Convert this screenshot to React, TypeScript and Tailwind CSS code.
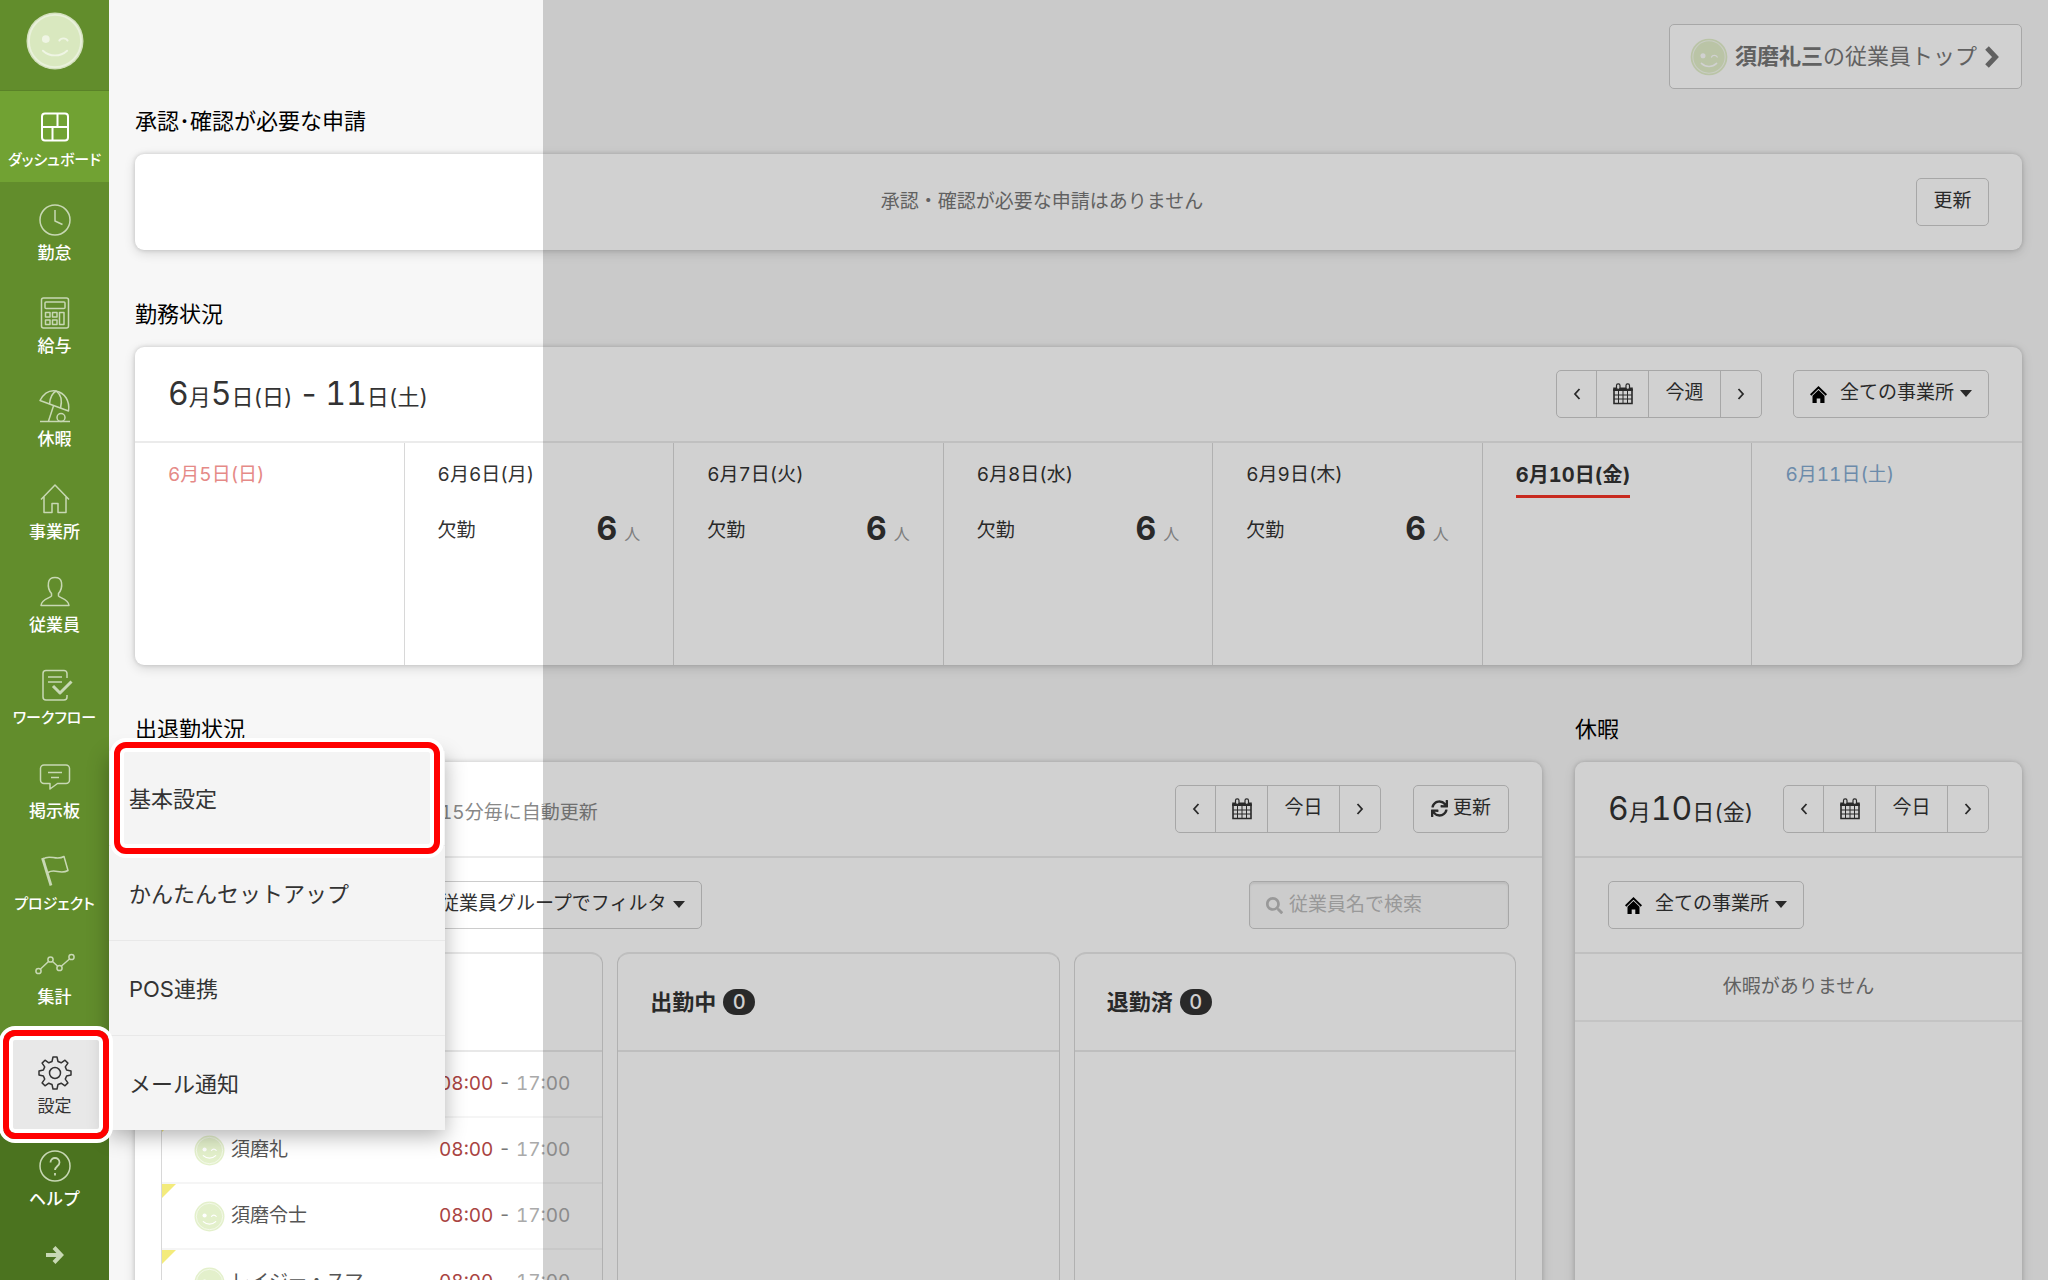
import type { ReactNode } from "react";
import { FaSearch, FaSync } from "react-icons/fa";

function Face({ className }: { className: string }) {
  return (
    <svg viewBox="0 0 60 60" className={className} aria-hidden="true">
      <circle cx="30" cy="30" r="29" fill="#e3f0cb" />
      <circle cx="30" cy="30" r="25.5" fill="none" stroke="#fff" strokeOpacity="0.7" strokeWidth="1.6" />
      <circle cx="20.500" cy="28" r="4" fill="#fff" />
      <path d="M34 30c1.500-3.500 7-3.500 9 0" fill="none" stroke="#fff" strokeWidth="2.200" strokeLinecap="round" />
      <path d="M18 40c7 6.500 17 6.500 24 0" fill="none" stroke="#fff" strokeWidth="2.400" strokeLinecap="round" />
    </svg>
  );
}

function AvatarFace() {
  return (
    <svg viewBox="0 0 60 60" className="size-[58px]" aria-hidden="true">
      <circle cx="30" cy="30" r="29.500" fill="#d3e0bd" />
      <circle cx="30" cy="30" r="27" fill="#d9e8bf" stroke="#e9f1db" strokeWidth="2" />
      <circle cx="20.500" cy="28" r="4" fill="#eff5e4" />
      <path d="M34.500 29.500c1.500-3 7-3 8.500 0" fill="none" stroke="#eff5e4" strokeWidth="2" strokeLinecap="round" />
      <path d="M17.500 40c7 6.500 18 6.500 25 0" fill="none" stroke="#eff5e4" strokeWidth="2" strokeLinecap="round" />
    </svg>
  );
}

function NavSvg({ children }: { children: ReactNode }) {
  return (
    <svg viewBox="0 0 40 36" className="h-9 w-10" fill="none" stroke="currentColor" strokeWidth="1.5" strokeLinejoin="round" aria-hidden="true">
      {children}
    </svg>
  );
}

const icons = {
  dashboard: (
    <NavSvg>
      <rect x="7" y="4.500" width="26" height="27" rx="3" strokeWidth="2" />
      <path d="M7 18h26M22.500 4.500V18M17.500 18v13.500" strokeWidth="2" />
    </NavSvg>
  ),
  clock: (
    <NavSvg>
      <circle cx="20" cy="18" r="15" />
      <path d="M20 8v11l7.500 3.500" />
    </NavSvg>
  ),
  calculator: (
    <NavSvg>
      <rect x="6.500" y="3" width="27" height="30" rx="2" />
      <rect x="10" y="7" width="20" height="6.500" rx="1" />
      <path d="M10.500 17.500h4.500v4.500h-4.500zM17.500 17.500h4.500v4.500h-4.500zM10.500 25h4.500v4.500h-4.500zM17.500 25h4.500v4.500h-4.500zM24.500 17.500H29v12h-4.500z" />
    </NavSvg>
  ),
  umbrella: (
    <NavSvg>
      <path d="M5 12.500C9 5 15 2 21 3c9 2 14 10 12.500 20z" />
      <path d="M14.500 16c.500-6 3-11 6.500-13 4.500 3 6.500 9 4.500 17M18.500 18 13.500 33M5 33.500h30" />
      <circle cx="26" cy="29.500" r="4" />
    </NavSvg>
  ),
  house: (
    <NavSvg>
      <path d="M6 18.500 20 4l14 14.500M9 16v15.500h8v-9h6v9h8V16" />
    </NavSvg>
  ),
  person: (
    <NavSvg>
      <path d="M16.500 19.500c-3-3.500-3.500-8-3-11C14 5 16.500 3.500 20 3.500s6 1.500 6.500 5c.500 3 0 7.500-3 11v2.500c1 2 10 3 10.500 9.500H6c.500-6.500 9.500-7.500 10.500-9.500z" />
    </NavSvg>
  ),
  workflow: (
    <NavSvg>
      <path d="M32 11V6.500a3 3 0 0 0-3-3H11a3 3 0 0 0-3 3V30a3 3 0 0 0 3 3h18a3 3 0 0 0 3-3v-2" />
      <path d="M13 10h14M13 15h14" />
      <path d="m18 19 7 7 11.500-11.500" strokeWidth="3" />
    </NavSvg>
  ),
  board: (
    <NavSvg>
      <path d="M9 5h22a3.500 3.500 0 0 1 3.500 3.500V20a3.500 3.500 0 0 1-3.500 3.500h-8.500L15 29v-5.500H9A3.500 3.500 0 0 1 5.500 20V8.500A3.500 3.500 0 0 1 9 5zM13 12.500h14M16 17.500h8" />
    </NavSvg>
  ),
  flag: (
    <NavSvg>
      <path d="M7.500 5 16 32.500" strokeWidth="2.800" />
      <path d="M8 6c7-5.500 13 2.500 21-2.500l4 14c-8 4.500-13-2.500-20 2" />
    </NavSvg>
  ),
  graph: (
    <NavSvg>
      <circle cx="3.500" cy="25" r="2.600" />
      <circle cx="15.500" cy="13.500" r="2.600" />
      <circle cx="24.500" cy="22" r="2.600" />
      <circle cx="36.500" cy="11" r="2.600" />
      <path d="m5.500 23 8-7.500M17.500 15.500l5 4.500M26.500 20l8-7" />
    </NavSvg>
  ),
  gear: (
    <NavSvg>
      <circle cx="20" cy="18" r="5.500" />
      <path d="M18 2h4l1 4.500 3.200 1.300L30 5.200l2.900 2.900-2.600 3.800 1.300 3.100L36 16v4l-4.400 1-1.300 3.100 2.600 3.800-2.900 2.900-3.800-2.600L23 29.500 22 34h-4l-1-4.500-3.200-1.300L10 30.800l-2.900-2.900 2.600-3.800L8.400 21 4 20v-4l4.400-1 1.300-3.100-2.600-3.800L10 5.200l3.800 2.600L17 6.500z" />
    </NavSvg>
  ),
  help: (
    <NavSvg>
      <circle cx="20" cy="18" r="15" />
      <path d="M15.500 14.500c0-6 9-6 9 0 0 3.500-4.500 4-4.500 7.500M20 25v2.500" strokeWidth="1.800" />
    </NavSvg>
  ),
};

const regularLabel = "text-[17px] font-medium";
const compactLabel = "text-[15px] font-medium [font-feature-settings:'palt']";

const navItems = [
  { label: "ダッシュボード", icon: icons.dashboard, active: true, text: compactLabel },
  { label: "勤怠", icon: icons.clock, text: regularLabel },
  { label: "給与", icon: icons.calculator, text: regularLabel },
  { label: "休暇", icon: icons.umbrella, text: regularLabel },
  { label: "事業所", icon: icons.house, text: regularLabel },
  { label: "従業員", icon: icons.person, text: regularLabel },
  { label: "ワークフロー", icon: icons.workflow, text: compactLabel },
  { label: "掲示板", icon: icons.board, text: regularLabel },
  { label: "プロジェクト", icon: icons.flag, text: compactLabel },
  { label: "集計", icon: icons.graph, text: regularLabel },
];

const menuItems = ["基本設定", "かんたんセットアップ", "POS連携", "メール通知"];

function NavLink({ label, icon, tone, text }: { label: string; icon: ReactNode; tone: string; text: string }) {
  return (
    <a href="#" className={`flex h-full flex-col items-center pt-[18px] ${tone}`}>
      {icon}
      <span className={`mt-1 leading-[22px] whitespace-nowrap text-[var(--label)] ${text}`}>{label}</span>
    </a>
  );
}

function Highlight({ className }: { className: string }) {
  return (
    <span
      className={`pointer-events-none absolute rounded-xl border-6 border-[#ff0000] shadow-[0_0_0_4px_#fff,inset_0_0_0_4px_#fff] ${className}`}
    />
  );
}

function Sidebar() {
  return (
    <nav className="relative z-20 flex w-[109px] shrink-0 flex-col bg-[#628d2c]">
      <a href="#" aria-label="プロフィール" className="flex h-[91px] justify-center border-b border-[#5a8228] pt-3">
        <AvatarFace />
      </a>
      <ul className="flex flex-col gap-[2px]">
        {navItems.map((item) => (
          <li key={item.label} className={`h-[91px] [--label:#fff] ${item.active ? "bg-[#71a233]" : ""}`}>
            <NavLink label={item.label} icon={item.icon} text={item.text} tone={item.active ? "text-white" : "text-[#c8d8b4]"} />
          </li>
        ))}
      </ul>
      <ul className="mt-auto bg-[#4b731f]">
        <li className="relative h-[93px] bg-[#e8e8e8] [--label:#333]">
          <NavLink label="設定" icon={icons.gear} text="text-[17px]" tone="text-[#333]" />
          <ul className="absolute bottom-0 left-full w-[336px] bg-[#f4f4f4] shadow-[0_6px_20px_rgba(0,0,0,0.3)]">
            {menuItems.map((label, i) => (
              <li key={label} className="relative border-b border-[#e8e8e8] last:border-b-0">
                <a href="#" className="flex h-[94px] items-center px-5 pt-0.5 text-[22px] text-[#333]">
                  {label}
                </a>
                {i === 0 && <Highlight className="inset-x-[5px] -top-[9px] -bottom-[9px]" />}
              </li>
            ))}
          </ul>
          <Highlight className="-top-[7px] right-0 -bottom-[9px] left-[3px]" />
        </li>
        <li className="h-[93px] [--label:#fff]">
          <NavLink label="ヘルプ" icon={icons.help} text={regularLabel} tone="text-[#c8d8b4]" />
        </li>
        <li className="flex h-[57px] justify-center pt-[22px]">
          <button type="button" aria-label="メニューを展開" className="h-5 text-[#c8d8b4]">
            <svg viewBox="0 0 18 18" className="size-[18px]" fill="none" stroke="currentColor" strokeWidth="4" aria-hidden="true">
              <path d="M0 9h15M8 1.500 15.200 9 8 16.500" />
            </svg>
          </button>
        </li>
      </ul>
    </nav>
  );
}

function Heading({ children }: { children: ReactNode }) {
  return <h2 className="mb-[17px] h-8 text-[22px] leading-8 text-black">{children}</h2>;
}

function Card({ children, className = "" }: { children: ReactNode; className?: string }) {
  return (
    <div className={`rounded-[9px] bg-white shadow-[0_0_4px_rgba(0,0,0,0.16),0_3px_12px_rgba(0,0,0,0.14)] ${className}`}>{children}</div>
  );
}

function Big({ children }: { children: ReactNode }) {
  return <span className="text-[32px]">{children}</span>;
}

function CalendarIcon() {
  return (
    <svg viewBox="0 0 20 22" className="h-[22px] w-5" aria-hidden="true">
      <path d="M1 6v14.500h18V6" fill="none" stroke="#333" strokeWidth="1.600" />
      <path d="M.2 4.500h19.600V8H.2z" fill="#333" />
      <path d="M5.500 8v12.500M10 8v12.500M14.500 8v12.500M1 12h18M1 16h18" stroke="#333" strokeWidth="1" />
      <rect x="3.500" y="0.800" width="3.500" height="5.500" rx="1.600" fill="#fff" stroke="#333" strokeWidth="1.200" />
      <rect x="13" y="0.800" width="3.500" height="5.500" rx="1.600" fill="#fff" stroke="#333" strokeWidth="1.200" />
    </svg>
  );
}

function Angle({ d }: { d: string }) {
  return (
    <svg viewBox="0 0 8 12" className="h-3 w-2" fill="none" stroke="#333" strokeWidth="1.800" aria-hidden="true">
      <path d={d} />
    </svg>
  );
}

function DateNav({ label }: { label: string }) {
  return (
    <div className="flex h-12 w-[206px] shrink-0 divide-x divide-[#ccc] rounded-[5px] border border-[#ccc] text-[19px] text-[#333]">
      <button type="button" aria-label="前へ" className="flex w-[40px] items-center justify-center">
        <Angle d="M6.500 1 2 6l4.500 5" />
      </button>
      <button type="button" aria-label="カレンダー" className="flex w-[52px] items-center justify-center">
        <CalendarIcon />
      </button>
      <button type="button" className="flex-1 pb-px">{label}</button>
      <button type="button" aria-label="次へ" className="flex w-[40px] items-center justify-center">
        <Angle d="m1.500 1 4.500 5-4.500 5" />
      </button>
    </div>
  );
}

function Caret() {
  return (
    <svg viewBox="0 0 12 7" className="pointer-events-none absolute top-5 right-[17px] h-[7px] w-3" aria-hidden="true">
      <path d="M0 0h12L6 7z" fill="#333" />
    </svg>
  );
}

function OfficeSelect() {
  return (
    <div className="relative">
      <svg viewBox="0 0 17 17" className="pointer-events-none absolute top-4 left-[17px] size-[17px]" aria-hidden="true">
        <path d="M8.500 0 17 8.300l-1.300 1.400-7.200-7-7.200 7L0 8.300z" fill="#000" />
        <path d="M8.500 4 14.500 9.800V17h-4.200v-4.500H6.700V17H2.500V9.800z" fill="#000" />
      </svg>
      <select
        aria-label="事業所"
        className="block h-12 w-[196px] appearance-none rounded-[5px] border border-[#ccc] bg-transparent pb-px pl-[46px] text-[19px] text-[#333]"
      >
        <option>全ての事業所</option>
      </select>
      <Caret />
    </div>
  );
}

const days = [
  { label: "6月5日(日)", tone: "text-[#e58a87]" },
  { label: "6月6日(月)", tone: "text-[#333]", absent: 6 },
  { label: "6月7日(火)", tone: "text-[#333]", absent: 6 },
  { label: "6月8日(水)", tone: "text-[#333]", absent: 6 },
  { label: "6月9日(木)", tone: "text-[#333]", absent: 6 },
  { label: "6月10日(金)", tone: "border-b-3 border-[#f53426] text-xl font-bold text-[#333]" },
  { label: "6月11日(土)", tone: "text-[#84aad0]" },
];

const rows = [
  { name: "", flagged: false },
  { name: "須磨礼", flagged: true },
  { name: "須磨令士", flagged: true },
  { name: "レイジー・スマ", flagged: true },
];

function StatusColumn({ title, children }: { title?: string; children?: ReactNode }) {
  return (
    <div className="rounded-t-xl border border-b-0 border-[#d8d8d8] border-t-2 border-t-[#e8e8e8]">
      <div className="flex h-[98px] items-center gap-[7px] border-b-2 border-[#e8e8e8] px-8 text-[22px] text-[#333]">
        {title && (
          <>
            <h3 className="font-bold">{title}</h3>
            <span className="flex h-[26px] w-8 items-center justify-center rounded-full bg-[#333] text-xl leading-none font-medium text-white">0</span>
          </>
        )}
      </div>
      {children}
    </div>
  );
}

export default function App() {
  return (
    <div className="relative flex h-screen overflow-hidden bg-[#f7f7f7] font-['Inter','Noto_Sans_CJK_JP',sans-serif] tabular-nums">
      <Sidebar />
      <main className="min-w-0 flex-1 px-[26px] pt-6">
        <div className="mb-4 flex justify-end">
          <a href="#" className="flex h-[65px] items-center rounded-[5px] border border-[#ccc] bg-white pr-[22px] pl-5 text-[22px] text-[#777]">
            <Face className="mr-[7px] size-[38px]" />
            <span>
              <b>須磨礼三</b>の従業員トップ
            </span>
            <svg viewBox="0 0 14 22" className="ml-2 h-[22px] w-[14px]" fill="none" stroke="currentColor" strokeWidth="5" aria-hidden="true">
              <path d="m2 2 8.500 9L2 20" />
            </svg>
          </a>
        </div>

        <section>
          <Heading>承認･確認が必要な申請</Heading>
          <Card className="flex items-center px-[33px] py-6">
            <p className="flex-1 text-center text-[19px] text-[#777]">承認・確認が必要な申請はありません</p>
            <button type="button" className="h-12 w-[73px] rounded-[5px] border border-[#ccc] pb-px text-[19px] text-[#333]">
              更新
            </button>
          </Card>
        </section>

        <section className="mt-12">
          <Heading>勤務状況</Heading>
          <Card>
            <div className="flex items-center border-b-2 border-[#ebebeb] px-[33px] py-[23px]">
              <p className="h-12 flex-1 text-[22px] leading-12 text-[#333]">
                <Big>6</Big>月<Big>5</Big>日(日) <Big>-</Big> <Big>11</Big>日(土)
              </p>
              <DateNav label="今週" />
              <div className="ml-[31px]">
                <OfficeSelect />
              </div>
            </div>
            <div className="grid grid-cols-7 divide-x divide-[#d8d8d8]">
              {days.map((day) => (
                <div key={day.label} className="h-[222px] px-[33px] pt-4 text-[19px] text-[#333]">
                  <span className={`inline-block pb-1 leading-8 ${day.tone}`}>{day.label}</span>
                  {day.absent && (
                    <div className="mt-3 flex h-12 items-center justify-between">
                      <span>欠勤</span>
                      <span className="leading-10">
                        <b className="text-[32px]">{day.absent}</b>
                        <span className="ml-[7px] text-base text-[#999]">人</span>
                      </span>
                    </div>
                  )}
                </div>
              ))}
            </div>
          </Card>
        </section>

        <div className="mt-12 grid grid-cols-4 gap-[33px]">
          <section className="col-span-3">
            <Heading>出退勤状況</Heading>
            <Card>
              <div className="flex items-center border-b-2 border-[#ebebeb] py-[23px] pr-[33px] pl-[305px]">
                <p className="flex-1 pt-2 text-[19px] text-[#888]">15分毎に自動更新</p>
                <DateNav label="今日" />
                <button
                  type="button"
                  className="ml-8 flex h-12 w-24 items-center justify-center gap-[5px] rounded-[5px] border border-[#ccc] pb-px text-[19px] text-[#333]"
                >
                  <FaSync size={17} />
                  更新
                </button>
              </div>
              <div className="flex justify-between py-[23px] pr-[33px] pl-[290px]">
                <div className="relative">
                  <select
                    aria-label="従業員グループ"
                    className="block h-12 w-[277px] appearance-none rounded-[5px] border border-[#ccc] bg-transparent pb-px pl-[14px] text-[19px] text-[#333]"
                  >
                    <option>従業員グループでフィルタ</option>
                  </select>
                  <Caret />
                </div>
                <div className="relative">
                  <FaSearch size={17} className="pointer-events-none absolute top-4 left-[17px] text-[#bbb]" />
                  <input
                    type="search"
                    aria-label="従業員名で検索"
                    placeholder="従業員名で検索"
                    className="block h-12 w-[260px] rounded-[5px] border border-[#ccc] bg-[#f9f9f9] pb-px pl-[39px] text-[19px] shadow-[inset_0_2px_2px_rgba(0,0,0,0.08)] placeholder:text-[#bbb]"
                  />
                </div>
              </div>
              <div className="grid min-h-[400px] grid-cols-3 gap-[14px] px-[26px]">
                <StatusColumn>
                  <ul>
                    {rows.map((row, i) => (
                      <li key={i} className="relative flex h-[66px] items-center border-b-2 border-[#f5f5f5] px-8 text-[19px] text-[#555]">
                        {row.flagged && (
                          <svg viewBox="0 0 14 14" className="absolute top-0 left-0 size-[14px]" aria-hidden="true">
                            <path d="M0 0h14L0 14z" fill="#f3eb7c" />
                          </svg>
                        )}
                        <Face className="mr-[6px] size-[31px]" />
                        <span className="flex-1">{row.name}</span>
                        <span className="text-[#aaa]">
                          <span className="text-[#a94442]">08:00</span> <span className="text-[#777]">-</span> 17:00
                        </span>
                      </li>
                    ))}
                  </ul>
                </StatusColumn>
                <StatusColumn title="出勤中" />
                <StatusColumn title="退勤済" />
              </div>
            </Card>
          </section>

          <section>
            <Heading>休暇</Heading>
            <Card className="min-h-[620px]">
              <div className="flex items-center justify-between border-b-2 border-[#ebebeb] px-[33px] py-[23px]">
                <p className="h-12 text-[22px] leading-12 whitespace-nowrap text-[#333]">
                  <Big>6</Big>月<Big>10</Big>日(金)
                </p>
                <DateNav label="今日" />
              </div>
              <div className="flex border-b-2 border-[#ebebeb] px-[33px] py-[23px]">
                <OfficeSelect />
              </div>
              <p className="border-b-2 border-[#f0f0f0] text-center text-[19px] leading-[66px] text-[#777]">休暇がありません</p>
            </Card>
          </section>
        </div>
      </main>
      <div className="pointer-events-none absolute inset-y-0 right-0 left-[543px] z-10 bg-black/18" />
    </div>
  );
}
